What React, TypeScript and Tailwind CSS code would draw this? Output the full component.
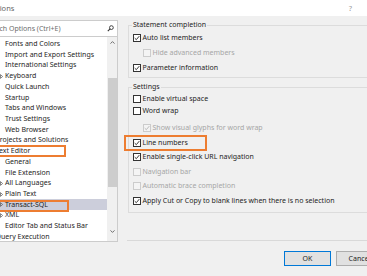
import React from "react";

type Item = { t: string; l: number; e?: boolean; sel?: boolean };

const items: Item[] = [
  { t: "Fonts and Colors", l: 1 },
  { t: "Import and Export Settings", l: 1 },
  { t: "International Settings", l: 1 },
  { t: "Keyboard", l: 1, e: true },
  { t: "Quick Launch", l: 1 },
  { t: "Startup", l: 1 },
  { t: "Tabs and Windows", l: 1 },
  { t: "Trust Settings", l: 1 },
  { t: "Web Browser", l: 1 },
  { t: "Projects and Solutions", l: 0 },
  { t: "Text Editor", l: 0 },
  { t: "General", l: 1 },
  { t: "File Extension", l: 1 },
  { t: "All Languages", l: 1, e: true },
  { t: "Plain Text", l: 1, e: true },
  { t: "Transact-SQL", l: 1, e: true, sel: true },
  { t: "XML", l: 1, e: true },
  { t: "Editor Tab and Status Bar", l: 1 },
  { t: "Query Execution", l: 0 },
];

function Box({ checked, disabled }: { checked?: boolean; disabled?: boolean }) {
  return (
    <span
      className={
        disabled
          ? "w-[8px] h-[8px] shrink-0 border border-[#cccccc] bg-[#f4f4f4] flex items-center justify-center"
          : "w-[8px] h-[8px] shrink-0 border border-[#333333] bg-white flex items-center justify-center"
      }
    >
      {checked && (
        <svg width="6" height="6" viewBox="0 0 6 6">
          <path
            d="M0.7 3.1 L2.3 4.7 L5.3 1.1"
            stroke={disabled ? "#b4b4b4" : "#222222"}
            strokeWidth="0.9"
            fill="none"
          />
        </svg>
      )}
    </span>
  );
}

function Row({
  label,
  checked,
  disabled,
  sub,
  h,
  mt,
}: {
  label: string;
  checked?: boolean;
  disabled?: boolean;
  sub?: boolean;
  h: string;
  mt?: string;
}) {
  return (
    <div className={`flex items-center ${h} ${mt ?? ""} ${sub ? "pl-[14px]" : "pl-[4px]"}`}>
      <Box checked={checked} disabled={disabled} />
      <span
        className={
          disabled
            ? "ml-[1.5px] text-[#a6a6a6] whitespace-nowrap leading-[10px]"
            : "ml-[1.5px] text-[#1e1e1e] whitespace-nowrap leading-[10px]"
        }
      >
        {label}
      </span>
    </div>
  );
}

export default function App() {
  return (
    <div className="w-[367px] h-[276px] bg-[#f0f0f0] overflow-hidden relative font-['Noto_Sans',sans-serif] text-[7px] text-[#1e1e1e]">
      {/* title bar */}
      <div className="h-[16px] bg-white flex items-center justify-between">
        <span className="-ml-[13.5px] text-[7.5px] text-[#666666] leading-[10px]">Options</span>
        <span className="mr-[15px] text-[7.5px] text-[#999999] leading-[10px]">?</span>
      </div>

      {/* body */}
      <div className="mt-[4px] flex h-[222px]">
        {/* left column */}
        <div className="w-[118px] shrink-0 flex flex-col">
          <div className="h-[17px] bg-white border border-l-0 border-[#cccccc] flex items-center justify-between">
            <span className="-ml-[15px] text-[#6d6d6d] whitespace-nowrap leading-[10px]">Search Options (Ctrl+E)</span>
            <svg width="7" height="7" viewBox="0 0 7 7" className="mr-[3px]">
              <circle cx="4.4" cy="2.6" r="1.9" stroke="#333333" strokeWidth="0.9" fill="none" />
              <path d="M3.1 3.9 L0.8 6.2" stroke="#333333" strokeWidth="1.1" />
            </svg>
          </div>
          <div className="h-[205px] bg-white border border-t-0 border-l-0 border-[#cccccc] flex overflow-hidden">
            <div className="flex-1 pt-[1.6px] flex flex-col overflow-hidden">
              {items.map((it) => (
                <div
                  key={it.t}
                  className={
                    it.sel
                      ? "h-[10.72px] shrink-0 flex items-center bg-[#cccedb] whitespace-nowrap"
                      : "h-[10.72px] shrink-0 flex items-center whitespace-nowrap"
                  }
                >
                  {it.l === 0 ? (
                    <span className="-ml-[4.5px] leading-[10px]">{it.t}</span>
                  ) : (
                    <>
                      <span className="w-[5px] shrink-0 flex items-center">
                        {it.e && (
                          <svg width="3" height="5" viewBox="0 0 3 5" className="-ml-[0.5px]">
                            <path d="M0.5 0.6 L2.6 2.5 L0.5 4.4 Z" fill="none" stroke="#555555" strokeWidth="0.7" />
                          </svg>
                        )}
                      </span>
                      <span className="leading-[10px]">{it.t}</span>
                    </>
                  )}
                </div>
              ))}
            </div>
            {/* scrollbar */}
            <div className="w-[10px] shrink-0 bg-[#f0f0f0] flex flex-col items-stretch">
              <div className="h-[11px] flex items-center justify-center">
                <svg width="5" height="3" viewBox="0 0 5 3">
                  <path d="M0.5 2.6 L2.5 0.6 L4.5 2.6" stroke="#606060" strokeWidth="0.9" fill="none" />
                </svg>
              </div>
              <div className="h-[30px]" />
              <div className="h-[109px] bg-[#cdcdcd] mx-[0.5px]" />
              <div className="flex-1" />
              <div className="h-[11px] flex items-center justify-center">
                <svg width="5" height="3" viewBox="0 0 5 3">
                  <path d="M0.5 0.4 L2.5 2.4 L4.5 0.4" stroke="#606060" strokeWidth="0.9" fill="none" />
                </svg>
              </div>
              <div className="h-[4px]" />
            </div>
          </div>
        </div>

        {/* right column */}
        <div className="flex-1 flex flex-col">
          <div className="mt-[5px] ml-[10px] w-[260px] h-[53px] shrink-0 border border-[#dcdcdc]">
            <div className="-mt-[6px] ml-[3px] px-[1px] w-fit bg-[#f0f0f0] leading-[10px] whitespace-nowrap">
              Statement completion
            </div>
            <Row label="Auto list members" checked h="h-[15px]" mt="mt-[0.5px]" />
            <Row label="Hide advanced members" disabled sub h="h-[15px]" />
            <Row label="Parameter information" checked h="h-[15px]" />
          </div>

          <div className="mt-[9px] ml-[10px] w-[260px] h-[126px] shrink-0 border border-[#dcdcdc]">
            <div className="-mt-[6px] ml-[3px] px-[1px] w-fit bg-[#f0f0f0] leading-[10px] whitespace-nowrap">
              Settings
            </div>
            <Row label="Enable virtual space" h="h-[13px]" />
            <Row label="Word wrap" h="h-[12px]" />
            <Row label="Show visual glyphs for word wrap" checked disabled sub h="h-[14.6px]" mt="mt-[3.7px]" />
            <Row label="Line numbers" checked h="h-[14.6px]" />
            <Row label="Enable single-click URL navigation" checked h="h-[14.6px]" />
            <Row label="Navigation bar" disabled h="h-[14.6px]" />
            <Row label="Automatic brace completion" disabled h="h-[14.6px]" />
            <Row label="Apply Cut or Copy to blank lines when there is no selection" checked h="h-[14.6px]" />
          </div>

          <div className="mt-[27px] ml-[9px] border-t border-[#d9d9d9]" />
        </div>
      </div>

      {/* buttons */}
      <div className="mt-[9px] flex justify-end gap-[5px] -mr-[16px]">
        <button className="w-[47px] h-[15px] bg-[#e1e1e1] border border-[#0078d7] text-[7px] text-[#1e1e1e] leading-[10px]">
          OK
        </button>
        <button className="w-[47px] h-[15px] bg-[#e1e1e1] border border-[#adadad] text-[7px] text-[#1e1e1e] leading-[10px]">
          Cancel
        </button>
      </div>

      {/* annotation boxes */}
      <div className="absolute left-[-2px] top-[145px] w-[68px] h-[12px] border-2 border-[#ed7d31]" />
      <div className="absolute left-[-2px] top-[200px] w-[71px] h-[12px] border-2 border-[#ed7d31]" />
      <div className="absolute left-[124px] top-[135px] w-[83px] h-[16px] border-2 border-[#ed7d31]" />
    </div>
  );
}
